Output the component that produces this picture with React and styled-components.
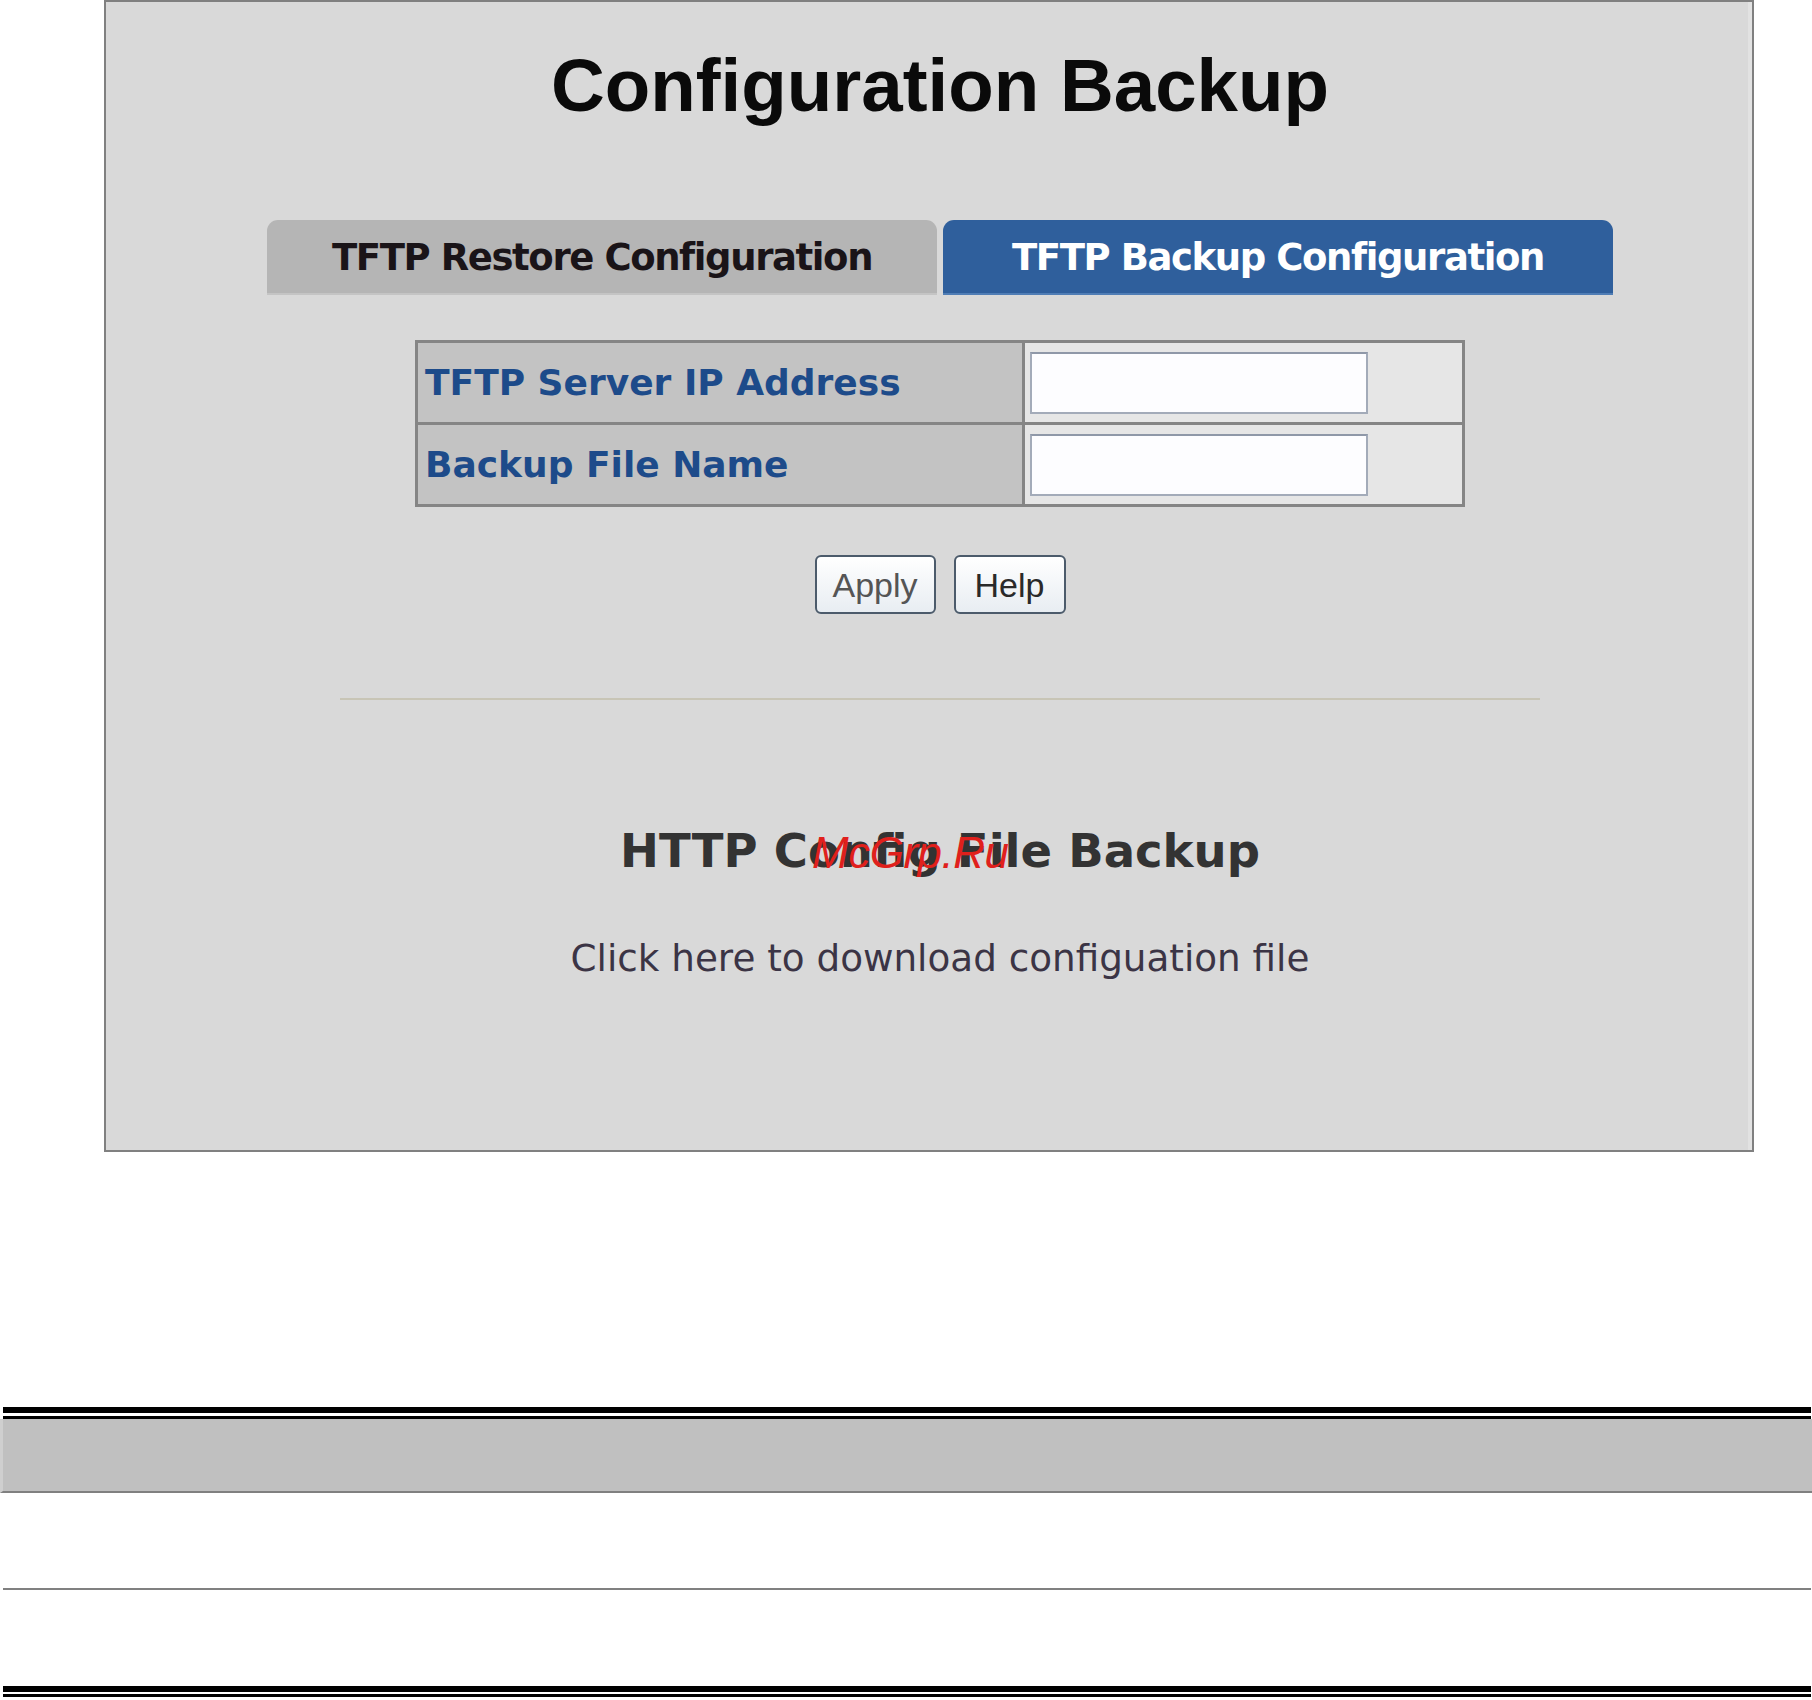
import React from "react";
import styled, { createGlobalStyle } from "styled-components";

const GlobalStyle = createGlobalStyle`
  html, body {
    margin: 0;
    padding: 0;
    background: #ffffff;
  }
  body {
    font-family: "DejaVu Sans", Verdana, sans-serif;
  }
`;

const Page = styled.div`
  width: 1812px;
  height: 1700px;
  overflow: hidden;
`;

const Panel = styled.div`
  box-sizing: border-box;
  margin-left: 104px;
  width: 1650px;
  border: 2px solid #808080;
  background: #d9d9d9;
  box-shadow: inset -4px 0 0 #e2e2e2;
  padding: 46px 0 173px 22px;
`;

const Content = styled.div`
  display: flex;
  flex-direction: column;
  align-items: center;
`;

const Title = styled.h1`
  margin: 0;
  font-family: "Liberation Sans", Arial, sans-serif;
  font-weight: bold;
  font-size: 74.5px;
  line-height: 75px;
  color: #0a0a0a;
`;

const Tabs = styled.div`
  display: flex;
  gap: 6px;
  margin-top: 97px;
`;

const Tab = styled.div`
  box-sizing: border-box;
  width: ${(p) => p.$width}px;
  height: 75px;
  display: flex;
  align-items: center;
  justify-content: center;
  border-radius: 11px 11px 0 0;
  background: ${(p) => (p.$active ? "#2f5f9c" : "#b5b5b5")};
  border-bottom: 2px solid ${(p) => (p.$active ? "#4f7db5" : "#c4c4c4")};
  color: ${(p) => (p.$active ? "#ffffff" : "#1a1418")};
  font-family: "DejaVu Sans", Verdana, sans-serif;
  font-weight: bold;
  font-size: 37px;
  letter-spacing: -1.4px;
  padding-top: 2px;
`;

const FormTable = styled.table`
  margin-top: 45px;
  width: 1050px;
  border-collapse: collapse;
  border: 3px solid #858585;
`;

const LabelCell = styled.td`
  box-sizing: border-box;
  width: 607px;
  height: 82px;
  padding: 0 0 0 7px;
  border: 3px solid #858585;
  background: #c3c3c3;
  color: #1d4b8a;
  font-family: "DejaVu Sans", Verdana, sans-serif;
  font-weight: bold;
  font-size: 36px;
  vertical-align: middle;
`;

const InputCell = styled.td`
  box-sizing: border-box;
  height: 82px;
  padding: 0 0 0 5px;
  border: 3px solid #858585;
  background: #e6e6e6;
  vertical-align: middle;
`;

const TextInput = styled.input`
  box-sizing: border-box;
  display: block;
  width: 338px;
  height: 62px;
  margin: 0;
  border: 2px solid #a3abb9;
  border-top-color: #8f98a8;
  background: #fdfdff;
  outline: none;
`;

const ButtonRow = styled.div`
  display: flex;
  gap: 18px;
  margin-top: 48px;
`;

const Button = styled.button`
  box-sizing: border-box;
  height: 59px;
  padding: 0 ${(p) => p.$pad}px;
  border: 2px solid #4c5b6b;
  border-radius: 6px;
  background: linear-gradient(#ffffff, #e8edf2);
  color: ${(p) => p.$color};
  font-family: "Liberation Sans", Arial, sans-serif;
  font-size: 34px;
  line-height: 1;
  cursor: pointer;
`;

const Divider = styled.hr`
  width: 1200px;
  height: 2px;
  margin: 84px 0 0 0;
  border: none;
  background: #c8c5b6;
`;

const HeadingWrap = styled.div`
  position: relative;
  margin-top: 128px;
`;

const SubHeading = styled.h2`
  margin: 0;
  font-family: "DejaVu Sans", Verdana, sans-serif;
  font-weight: bold;
  font-size: 46.5px;
  line-height: 47px;
  color: #333333;
`;

const Watermark = styled.span`
  position: absolute;
  left: 192px;
  top: 1px;
  font-family: "Liberation Sans", Arial, sans-serif;
  font-style: italic;
  font-size: 44px;
  line-height: 47px;
  color: #e0201c;
  letter-spacing: -0.5px;
`;

const DownloadLink = styled.a`
  display: block;
  margin-top: 64px;
  font-family: "DejaVu Sans", Verdana, sans-serif;
  font-size: 37.3px;
  line-height: 38px;
  color: #3b3445;
  text-decoration: none;
  cursor: pointer;
`;

const Summary = styled.div`
  margin-top: 255px;
  width: 1812px;
`;

const Rule = styled.div`
  margin: 0 1px 0 3px;
  height: ${(p) => p.$h}px;
  background: ${(p) => p.$color};
  margin-top: ${(p) => p.$gap || 0}px;
`;

const HeaderBand = styled.div`
  height: 72px;
  background: #c0c0c0;
  border-left: 3px solid #cfcfcf;
  border-bottom: 2px solid #808080;
`;

const BodyRow = styled.div`
  height: 95px;
  margin: 0 1px 0 3px;
  border-bottom: 2px solid #808080;
`;

const LastRow = styled.div`
  height: 96px;
`;

export default function App() {
  return (
    <Page>
      <GlobalStyle />
      <Panel>
        <Content>
          <Title>Configuration Backup</Title>
          <Tabs>
            <Tab $width={670}>TFTP Restore Configuration</Tab>
            <Tab $width={670} $active>
              TFTP Backup Configuration
            </Tab>
          </Tabs>
          <FormTable>
            <tbody>
              <tr>
                <LabelCell>TFTP Server IP Address</LabelCell>
                <InputCell>
                  <TextInput type="text" />
                </InputCell>
              </tr>
              <tr>
                <LabelCell>Backup File Name</LabelCell>
                <InputCell>
                  <TextInput type="text" />
                </InputCell>
              </tr>
            </tbody>
          </FormTable>
          <ButtonRow>
            <Button $pad={16} $color="#555555">
              Apply
            </Button>
            <Button $pad={19} $color="#2a2a2a">
              Help
            </Button>
          </ButtonRow>
          <Divider />
          <HeadingWrap>
            <SubHeading>HTTP Config File Backup</SubHeading>
            <Watermark>McGrp.Ru</Watermark>
          </HeadingWrap>
          <DownloadLink>Click here to download configuation file</DownloadLink>
        </Content>
      </Panel>
      <Summary>
        <Rule $h={6} $color="#000000" />
        <Rule $h={3} $color="#000000" $gap={3} />
        <HeaderBand />
        <BodyRow />
        <LastRow />
        <Rule $h={6} $color="#000000" />
        <Rule $h={3} $color="#000000" $gap={2} />
      </Summary>
    </Page>
  );
}
